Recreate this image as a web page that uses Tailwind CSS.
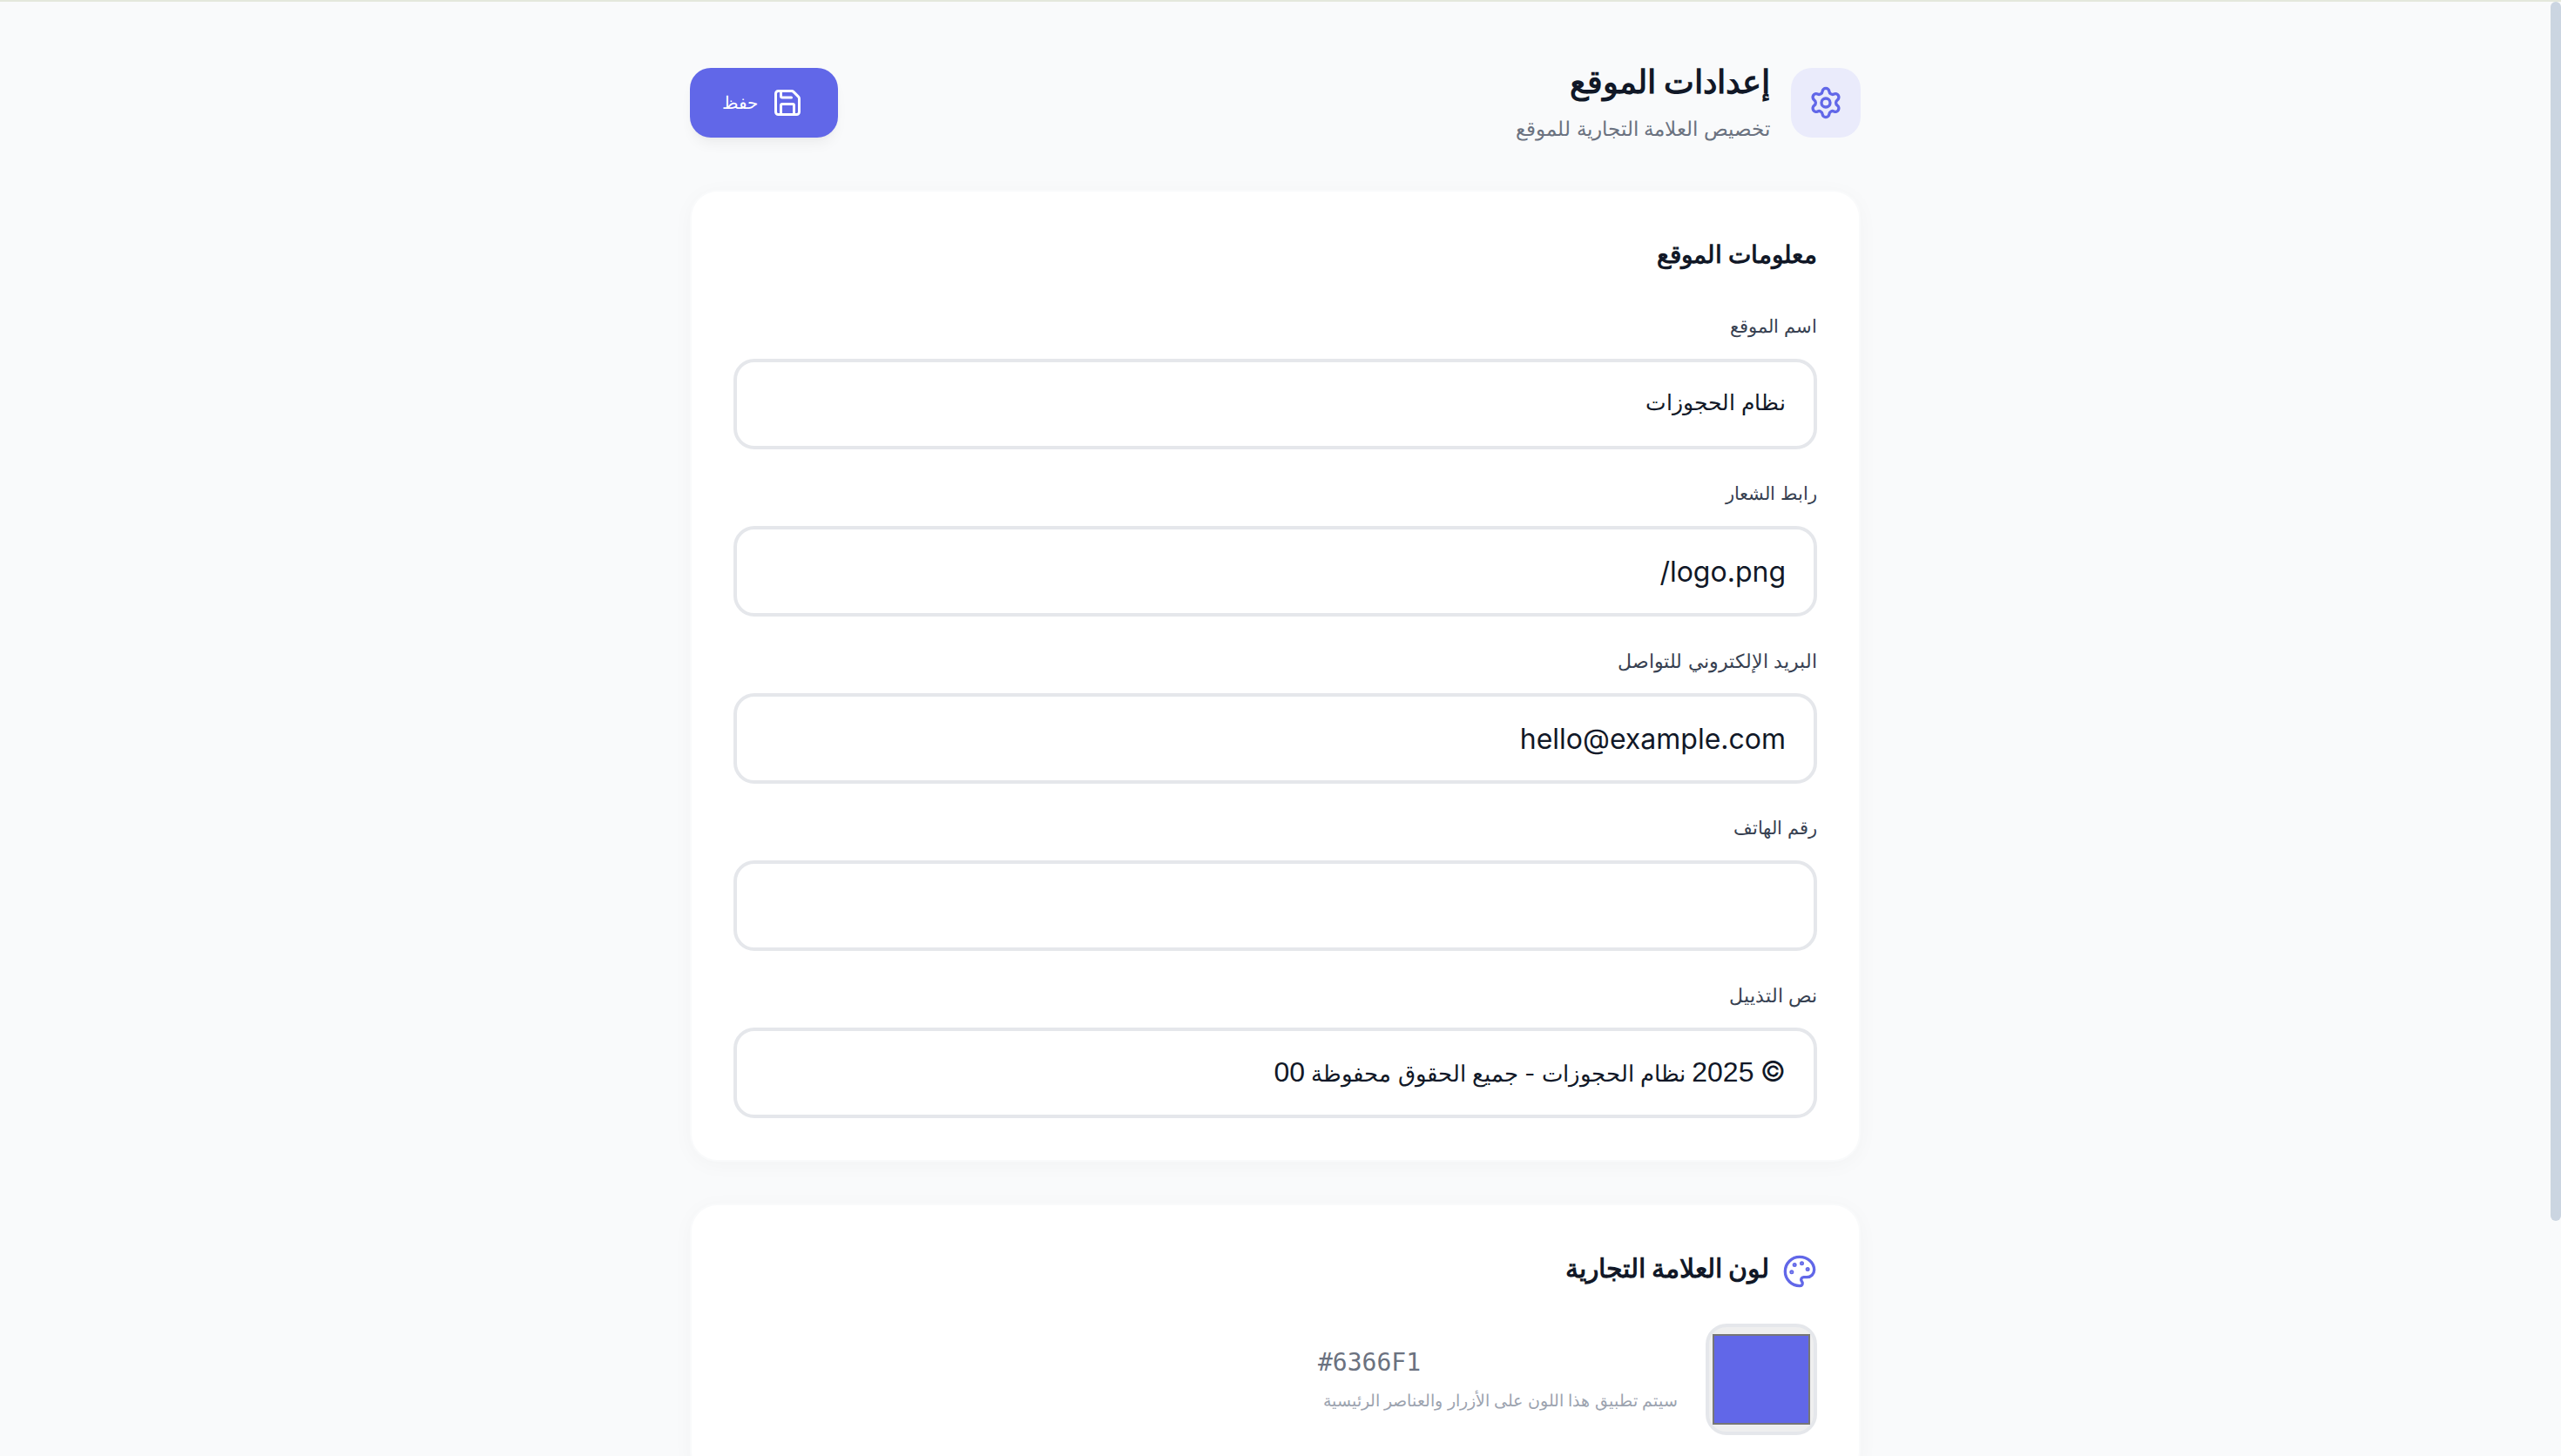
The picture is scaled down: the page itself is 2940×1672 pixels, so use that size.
<!DOCTYPE html>
<html dir="rtl" lang="ar">
<head>
<meta charset="utf-8">
<script src="https://cdn.jsdelivr.net/npm/@tailwindcss/browser@4"></script>
</head>
<body class="h-[1672px] overflow-hidden bg-[#f9fafb] font-['Inter','Liberation_Sans',sans-serif] relative">
<div class="h-[2px] bg-[#e4e8dc]"></div>
<main class="w-[2928px] mr-[12px] px-[792px] pt-[76px]">
  <header class="flex h-20 items-center justify-between mb-[60px]">
    <div class="flex items-center gap-6">
      <div class="w-20 h-20 rounded-3xl bg-[#eaebfb] flex items-center justify-center text-[#6167e8]">
        <svg width="40" height="40" viewBox="0 0 24 24" fill="none" stroke="currentColor" stroke-width="2" stroke-linecap="round" stroke-linejoin="round"><path d="M9.671 4.136a2.34 2.34 0 0 1 4.659 0 2.34 2.34 0 0 0 3.319 1.915 2.34 2.34 0 0 1 2.33 4.033 2.34 2.34 0 0 0 0 3.831 2.34 2.34 0 0 1-2.33 4.033 2.34 2.34 0 0 0-3.319 1.915 2.34 2.34 0 0 1-4.659 0 2.34 2.34 0 0 0-3.319-1.915 2.34 2.34 0 0 1-2.33-4.033 2.34 2.34 0 0 0 0-3.831A2.34 2.34 0 0 1 6.35 6.051a2.34 2.34 0 0 0 3.319-1.915"/><circle cx="12" cy="12" r="3"/></svg>
      </div>
      <div>
        <h1 class="text-[37px] leading-[48px] font-bold text-[#111827]">إعدادات الموقع</h1>
        <p class="text-[23.3px] leading-[36px] text-[#6b7280] mt-3">تخصيص العلامة التجارية للموقع</p>
      </div>
    </div>
    <button class="w-[170px] h-20 pr-1 rounded-3xl bg-[#6167e8] text-white flex items-center justify-center gap-4 text-[20px] shadow-lg shadow-black/5">
      <svg width="36" height="36" viewBox="0 0 24 24" fill="none" stroke="currentColor" stroke-width="2" stroke-linecap="round" stroke-linejoin="round"><path d="M15.2 3a2 2 0 0 1 1.4.6l3.8 3.8a2 2 0 0 1 .6 1.4V19a2 2 0 0 1-2 2H5a2 2 0 0 1-2-2V5a2 2 0 0 1 2-2z"/><path d="M17 21v-7a1 1 0 0 0-1-1H8a1 1 0 0 0-1 1v7"/><path d="M7 3v4a1 1 0 0 0 1 1h7"/></svg>
      <span>حفظ</span>
    </button>
  </header>

  <section class="bg-white rounded-[32px] border-2 border-[#f9fafb] shadow-[0_4px_24px_rgba(0,0,0,0.03)] p-12 mb-12">
    <h2 class="text-[28px] leading-[48px] font-bold text-[#111827] mb-10">معلومات الموقع</h2>
    <div class="flex flex-col gap-8">
      <label class="block">
        <span class="block text-[21px] leading-[38px] text-[#374151] mb-[18px]">اسم الموقع</span>
        <input dir="rtl" class="block w-full h-[104px] px-8 pb-1 rounded-3xl border-4 border-[#e5e7eb] bg-white text-[25px] text-[#111827]" value="نظام الحجوزات">
      </label>
      <label class="block">
        <span class="block text-[21px] leading-[38px] text-[#374151] mb-[18px]">رابط الشعار</span>
        <input dir="ltr" class="block w-full h-[104px] px-8 rounded-3xl border-4 border-[#e5e7eb] bg-white text-right text-[32px] text-[#111827]" value="/logo.png">
      </label>
      <label class="block">
        <span class="block text-[22.3px] leading-[38px] text-[#374151] mb-[18px]">البريد الإلكتروني للتواصل</span>
        <input dir="rtl" class="block w-full h-[104px] px-8 rounded-3xl border-4 border-[#e5e7eb] bg-white text-[32px] text-[#111827]" value="hello@example.com">
      </label>
      <label class="block">
        <span class="block text-[21px] leading-[38px] text-[#374151] mb-[18px]">رقم الهاتف</span>
        <input dir="rtl" class="block w-full h-[104px] px-8 rounded-3xl border-4 border-[#e5e7eb] bg-white text-[32px] text-[#111827]" value="">
      </label>
      <div>
        <span class="block text-[22px] leading-[38px] text-[#374151] mb-[18px]">نص التذييل</span>
        <div class="w-full h-[104px] px-8 rounded-3xl border-4 border-[#e5e7eb] bg-white text-[26px] leading-[94px] text-[#111827] whitespace-nowrap"><span class="text-[32px]">©</span> <span class="text-[32px] font-['Liberation_Sans']">2025</span> نظام الحجوزات - جميع الحقوق محفوظة <span class="text-[32px] font-['Liberation_Sans']">00</span></div>
      </div>
    </div>
  </section>

  <section class="bg-white rounded-[32px] border-2 border-[#f9fafb] shadow-[0_4px_24px_rgba(0,0,0,0.03)] p-12">
    <h2 class="flex items-center gap-[15px] text-[29.5px] leading-[48px] font-bold text-[#111827] mb-10">
      <svg class="text-[#6167e8] mt-2" width="40" height="40" viewBox="0 0 24 24" fill="none" stroke="currentColor" stroke-width="2" stroke-linecap="round" stroke-linejoin="round"><path d="M12 22a1 1 0 0 1 0-20 10 9 0 0 1 10 9 5 5 0 0 1-5 5h-2.25a1.75 1.75 0 0 0-1.4 2.8l.3.4a1.75 1.75 0 0 1-1.4 2.8z"/><circle cx="13.5" cy="6.5" r=".5" fill="currentColor"/><circle cx="17.5" cy="10.5" r=".5" fill="currentColor"/><circle cx="6.5" cy="12.5" r=".5" fill="currentColor"/><circle cx="8.5" cy="7.5" r=".5" fill="currentColor"/></svg>
      لون العلامة التجارية
    </h2>
    <div class="flex items-center gap-8">
      <div class="w-32 h-32 rounded-3xl border-4 border-[#e5e7eb] bg-[#efefef] flex items-center justify-center">
        <div class="w-[112px] h-[104px] bg-[#6167e8] border-2 border-[#767676]"></div>
      </div>
      <div class="w-[413px]">
        <p dir="ltr" class="font-['DejaVu_Sans_Mono'] text-[28px] leading-[40px] text-[#6b7280]">#6366F1</p>
        <p class="text-[19.3px] leading-[32px] text-[#9ca3af] mt-[7px] whitespace-nowrap">سيتم تطبيق هذا اللون على الأزرار والعناصر الرئيسية</p>
      </div>
    </div>
  </section>
</main>
<div class="absolute top-[2px] right-0 w-[12px] h-[1400px] rounded-full bg-[#cbd5e1]"></div>
</body>
</html>
